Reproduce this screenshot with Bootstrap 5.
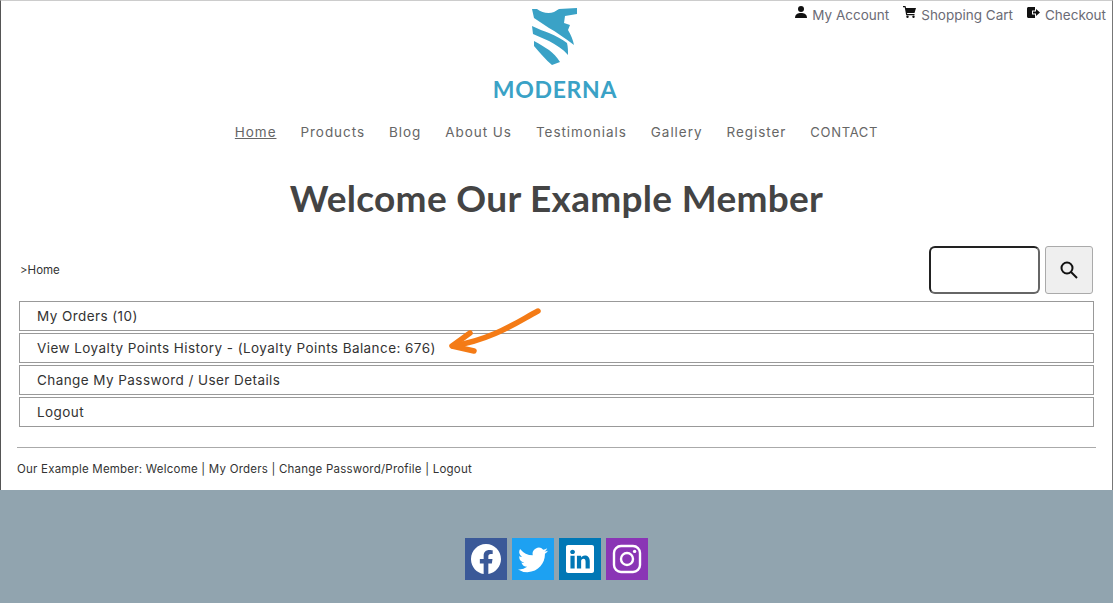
<!DOCTYPE html>
<html lang="en">

<head>
    <meta charset="UTF-8">
    <meta name="viewport" content="width=device-width, initial-scale=1.0">
    <title>Welcome Our Example Member</title>
    <link href="https://cdn.jsdelivr.net/npm/bootstrap@5.3.0/dist/css/bootstrap.min.css" rel="stylesheet">
    <style>
        body {
            font-family: "Inter", "Liberation Sans", sans-serif;
            color: #333;
            background-color: #fff;
        }

        .page-wrap {
            border-top: 1px solid #ccc;
            border-left: 1px solid #555;
            border-right: 1px solid #777;
            height: 490px;
            padding: 0 16px;
        }

        .head-grid {
            display: grid;
            grid-template-columns: 1fr auto 1fr;
            height: 103px;
        }

        .logo-box {
            padding-top: 7px;
            color: #3aa2c6;
            text-align: center;
            margin-left: -3px;
        }

        .logo-word {
            font-family: "Lato", sans-serif;
            font-size: 23px;
            font-weight: 700;
            letter-spacing: 0.7px;
            line-height: 26px;
            margin-top: 11px;
        }

        .top-links {
            font-size: 13.5px;
            padding-top: 4px;
            margin-right: -10px;
            gap: 14px;
        }

        .top-links a {
            color: #6b6b75;
            text-decoration: none;
            white-space: nowrap;
        }

        .top-links svg {
            margin-right: 5px;
            vertical-align: 2px;
        }

        .main-nav {
            gap: 24px;
            height: 57px;
            padding-top: 18px;
            font-size: 13.5px;
            letter-spacing: 0.95px;
        }

        .main-nav a {
            color: #666;
            text-decoration: none;
        }

        .main-nav a.is-current {
            text-decoration: underline;
        }

        .main-nav a.nav-caps {
            font-size: 13px;
            letter-spacing: 0.7px;
        }

        .page-title {
            font-family: "Lato", sans-serif;
            font-size: 37px;
            font-weight: 700;
            letter-spacing: 0.3px;
            color: #444;
            text-align: center;
            margin: 0;
            line-height: 44px;
            height: 85px;
            padding-top: 15px;
        }

        .crumb-row {
            padding: 0 3px 0 3px;
            height: 55px;
            gap: 5px;
        }

        .crumb-text {
            font-size: 11.5px;
            line-height: 48px;
            color: #333;
            margin-right: auto;
        }

        .search-input {
            width: 111px;
            height: 48px;
            border: 2px solid #222;
            border-bottom-color: #666;
            border-right-color: #666;
            border-radius: 6px;
            background: #fff;
        }

        .search-btn {
            width: 48px;
            height: 48px;
            border: 1px solid #aaa;
            border-radius: 3px;
            background: #efefef;
            padding: 0;
        }

        .member-list {
            gap: 2px;
            padding: 0 2px;
        }

        .member-list a {
            display: block;
            height: 30px;
            line-height: 28px;
            border: 1px solid #999;
            padding-left: 17px;
            font-size: 13.5px;
            letter-spacing: 0.43px;
            color: #333;
            text-decoration: none;
        }

        .arrow-over {
            position: absolute;
            left: 440px;
            top: 300px;
        }

        .foot-rule {
            margin: 20px 0 14px;
            border-top: 1px solid #aaa;
            opacity: 1;
        }

        .foot-links {
            font-size: 11.5px;
            letter-spacing: 0.22px;
            line-height: 14px;
        }

        .foot-links a {
            color: #333;
            text-decoration: none;
        }

        .social-band {
            background-color: #91a4af;
            height: 113px;
            padding-top: 48px;
            gap: 5px;
        }

        .social-tile {
            width: 42px;
            height: 42px;
        }
    </style>
</head>

<body>
    <div class="page-wrap">
        <div class="head-grid">
            <div></div>
            <div class="logo-box">
                <svg width="45" height="57" viewBox="0 0 45 57" fill="#3aa2c6">
                    <path d="M0 1H5C10 5 17 6 22 4L27 1L45 0V6L33 8L32 15L38 17L36 22C39 27 41 32 42 37C33 30 24 24 17 20L2 10Z"/>
                    <path d="M0 18C6 21 12 23 17 25C24 28 30 31 35 35C36 39 36 43 36 47C31 41 24 37 17 33L1 26Z"/>
                    <path d="M2 33C8 36 12 39 17 42C21 45 25 49 28 54L20 57C14 52 8 45 2 38Z"/>
                </svg>
                <div class="logo-word">MODERNA</div>
            </div>
            <div class="top-links d-flex justify-content-end align-items-start">
                <a href="#"><svg width="12" height="12" viewBox="0 0 12 12" fill="#111"><circle cx="6" cy="3" r="3"/><path d="M0 12C0 8 3 7 6 7S12 8 12 12Z"/></svg>My Account</a>
                <a href="#"><svg width="13" height="12" viewBox="0 0 13 12" fill="#111"><path d="M0 0H2.5L3 2H13L11.5 7H4L4.3 8H11.5V9.2H3.2L1.7 1.2H0Z"/><circle cx="4.5" cy="10.8" r="1.2"/><circle cx="10.5" cy="10.8" r="1.2"/></svg>Shopping Cart</a>
                <a href="#"><svg width="13" height="11" viewBox="0 0 13 11" fill="#111"><path d="M1.5 0H8V3.5H5V7.5H8V11H1.5C.7 11 0 10.3 0 9.5V1.5C0 .7 .7 0 1.5 0Z"/><path d="M6 4.5H9V2L13 5.5L9 9V6.5H6Z"/></svg>Checkout</a>
            </div>
        </div>

        <nav class="main-nav d-flex justify-content-center align-items-baseline">
            <a class="is-current" href="#">Home</a>
            <a href="#">Products</a>
            <a href="#">Blog</a>
            <a href="#">About Us</a>
            <a href="#">Testimonials</a>
            <a href="#">Gallery</a>
            <a href="#">Register</a>
            <a class="nav-caps" href="#">CONTACT</a>
        </nav>

        <h1 class="page-title">Welcome Our Example Member</h1>

        <div class="crumb-row d-flex align-items-start">
            <div class="crumb-text">&gt;Home</div>
            <input class="search-input" type="text" aria-label="Search">
            <button class="search-btn d-flex align-items-center justify-content-center" type="button" aria-label="Search">
                <svg width="18" height="18" viewBox="0 0 18 18" fill="none" stroke="#111" stroke-width="2"><circle cx="7" cy="7" r="5.5"/><path d="M11 11L17 17"/></svg>
            </button>
        </div>

        <div class="member-list d-flex flex-column">
            <a href="#">My Orders (10)</a>
            <a href="#">View Loyalty Points History - (Loyalty Points Balance: 676)</a>
            <a href="#">Change My Password / User Details</a>
            <a href="#">Logout</a>
        </div>

        <hr class="foot-rule">

        <div class="foot-links">
            Our Example Member: <a href="#">Welcome</a> | <a href="#">My Orders</a> | <a href="#">Change Password/Profile</a> | <a href="#">Logout</a>
        </div>
    </div>

    <svg class="arrow-over" width="110" height="60" viewBox="440 300 110 60" fill="none" stroke="#f47b16" stroke-linecap="round" stroke-linejoin="round">
        <path d="M538 311C520 320 495 339 453 346" stroke-width="5.5"/>
        <path d="M470 333L452 346L474 351" stroke-width="5.5"/>
    </svg>

    <div class="social-band d-flex justify-content-center align-items-start">
        <a class="social-tile d-flex align-items-center justify-content-center" href="#" style="background:#3b5998" aria-label="Facebook">
            <svg width="30" height="30" viewBox="0 0 16 16" fill="#fff"><path d="M16 8.049c0-4.446-3.582-8.05-8-8.05C3.58 0-.002 3.603-.002 8.05c0 4.017 2.926 7.347 6.75 7.951v-5.625h-2.03V8.05H6.75V6.275c0-2.017 1.195-3.131 3.022-3.131.876 0 1.791.157 1.791.157v1.98h-1.009c-.993 0-1.303.621-1.303 1.258v1.51h2.218l-.354 2.326H9.25V16c3.824-.604 6.75-3.934 6.75-7.951z"/></svg>
        </a>
        <a class="social-tile d-flex align-items-center justify-content-center" href="#" style="background:#1da1f2" aria-label="Twitter">
            <svg width="30" height="30" viewBox="0 0 16 16" fill="#fff"><path d="M5.026 15c6.038 0 9.341-5.003 9.341-9.334 0-.14 0-.282-.006-.422A6.685 6.685 0 0 0 16 3.542a6.658 6.658 0 0 1-1.889.518 3.301 3.301 0 0 0 1.447-1.817 6.533 6.533 0 0 1-2.087.793A3.286 3.286 0 0 0 7.875 6.03a9.325 9.325 0 0 1-6.767-3.429 3.289 3.289 0 0 0 1.018 4.382A3.323 3.323 0 0 1 .64 6.575v.045a3.288 3.288 0 0 0 2.632 3.218 3.203 3.203 0 0 1-.865.115 3.23 3.23 0 0 1-.614-.057 3.283 3.283 0 0 0 3.067 2.277A6.588 6.588 0 0 1 .78 13.58a6.32 6.32 0 0 1-.78-.045A9.344 9.344 0 0 0 5.026 15z"/></svg>
        </a>
        <a class="social-tile d-flex align-items-center justify-content-center" href="#" style="background:#0077b5" aria-label="LinkedIn">
            <svg width="28" height="28" viewBox="0 0 16 16" fill="#fff"><path d="M0 1.146C0 .513.526 0 1.175 0h13.65C15.474 0 16 .513 16 1.146v13.708c0 .633-.526 1.146-1.175 1.146H1.175C.526 16 0 15.487 0 14.854V1.146zm4.943 12.248V6.169H2.542v7.225h2.401zm-1.2-8.212c.837 0 1.358-.554 1.358-1.248-.015-.709-.52-1.248-1.342-1.248-.822 0-1.359.54-1.359 1.248 0 .694.521 1.248 1.327 1.248h.016zm4.908 8.212V9.359c0-.216.016-.432.08-.586.173-.431.568-.878 1.232-.878.869 0 1.216.662 1.216 1.634v3.865h2.401V9.25c0-2.22-1.184-3.252-2.764-3.252-1.274 0-1.845.7-2.165 1.193v.025h-.016a5.54 5.54 0 0 1 .016-.025V6.169h-2.4c.03.678 0 7.225 0 7.225h2.4z"/></svg>
        </a>
        <a class="social-tile d-flex align-items-center justify-content-center" href="#" style="background:#8a35b5" aria-label="Instagram">
            <svg width="30" height="30" viewBox="0 0 30 30" fill="none" stroke="#fff" stroke-width="2.4"><rect x="2" y="2" width="26" height="26" rx="7"/><circle cx="15" cy="15" r="6"/><circle cx="22.6" cy="7.4" r="1.7" fill="#fff" stroke="none"/></svg>
        </a>
    </div>

    <script src="https://cdn.jsdelivr.net/npm/bootstrap@5.3.0/dist/js/bootstrap.bundle.min.js"></script>
</body>

</html>
